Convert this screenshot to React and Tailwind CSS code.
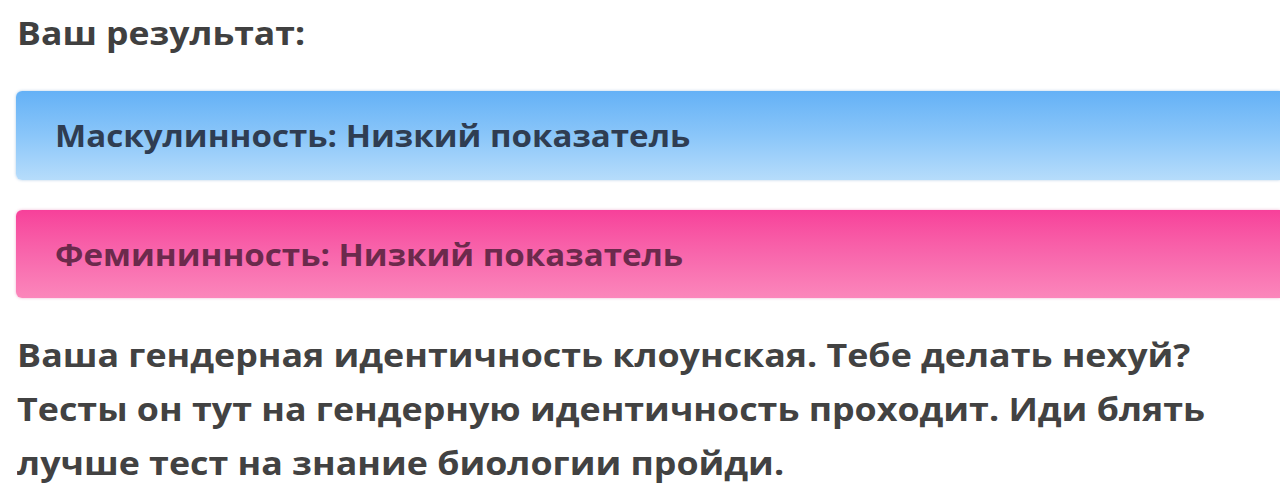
export default function App() {
  return (
    <div
      className="w-[1280px] h-[495px] overflow-hidden bg-white pl-[16px] pt-[11px]"
      style={{ fontFamily: '"Open Sans", "Noto Sans", sans-serif' }}
    >
      <h1 className="text-[32px] leading-[44px] font-bold text-[#404040] pl-[1px] origin-left scale-x-[1.11] whitespace-nowrap">
        Ваш результат:
      </h1>

      <div className="mt-[36px] flex flex-col gap-[30px]">
        <div className="h-[89px] flex items-center pl-[39px] rounded-l-[6px] bg-gradient-to-b from-[#64b1f6] via-[#8ac6f9] to-[#b6dcfb] shadow-[0_0_3px_rgba(80,140,200,0.45)]">
          <span className="inline-block text-[30px] font-bold text-[#2f3d52] origin-left scale-x-[1.103] whitespace-nowrap">
            Маскулинность: Низкий показатель
          </span>
        </div>
        <div className="h-[88px] flex items-center pl-[39px] rounded-l-[6px] bg-gradient-to-b from-[#f7409a] via-[#f866ac] to-[#fb86bb] shadow-[0_0_3px_rgba(220,80,150,0.45)]">
          <span className="inline-block text-[30px] font-bold text-[#6b2a4c] origin-left scale-x-[1.103] whitespace-nowrap">
            Фемининность: Низкий показатель
          </span>
        </div>
      </div>

      <p className="mt-[30px] text-[32px] leading-[54px] font-bold text-[#424242] pl-[1px] origin-left scale-x-[1.118] whitespace-nowrap">
        Ваша гендерная идентичность клоунская. Тебе делать нехуй?
        <br />
        Тесты он тут на гендерную идентичность проходит. Иди блять
        <br />
        лучше тест на знание биологии пройди.
      </p>
    </div>
  );
}
